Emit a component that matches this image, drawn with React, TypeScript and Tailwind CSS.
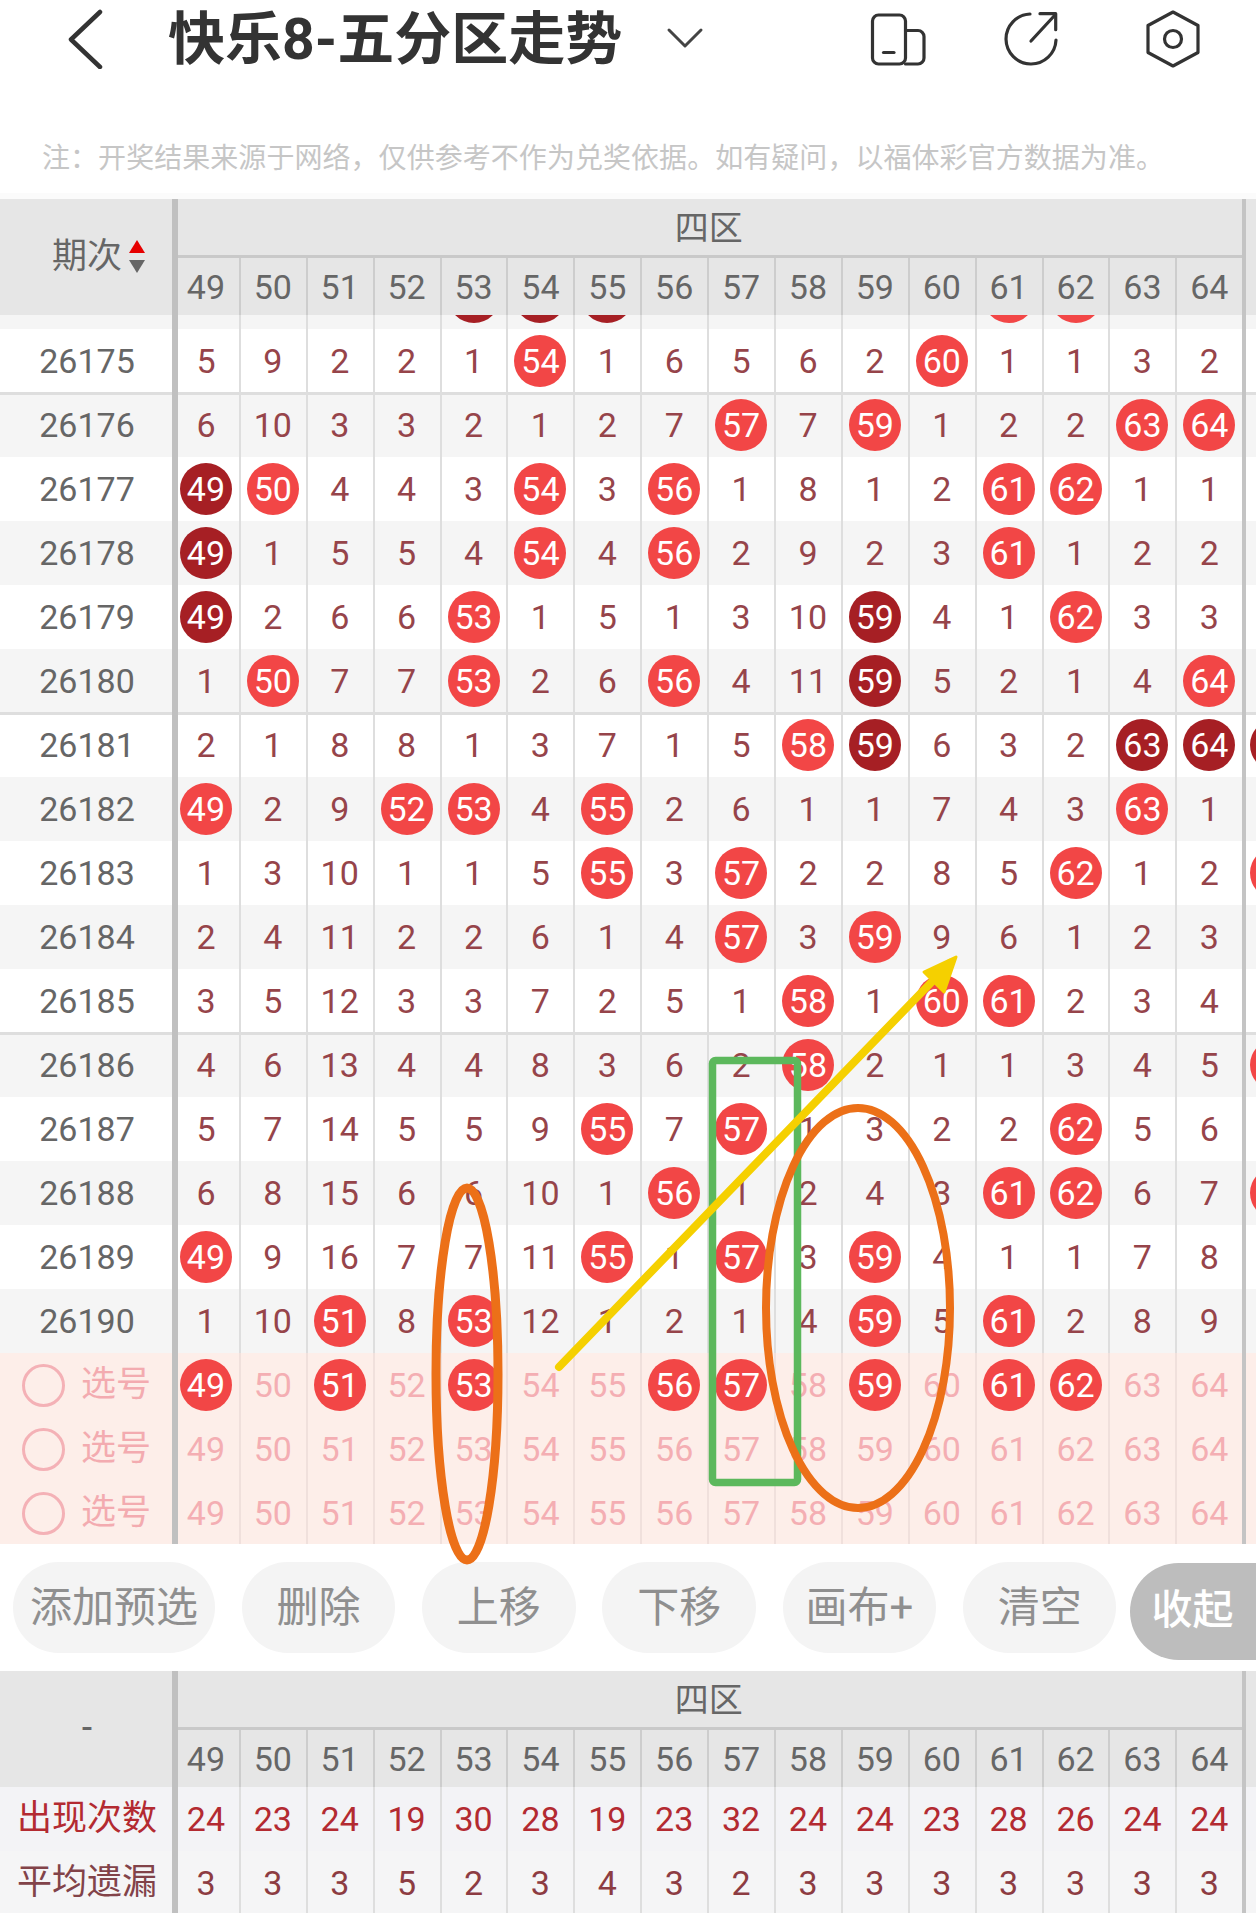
const cols = [49, 50, 51, 52, 53, 54, 55, 56, 57, 58, 59, 60, 61, 62, 63, 64, 65];

// R = red ball, D = dark ball, . = empty, the 17th entry is the clipped column on the right
const rows: { id: string; cells: string }[] = [
  { id: '', cells: '. . . . D D D . . . . . R R . . .' },
  { id: '26175', cells: '5 9 2 2 1 R 1 6 5 6 2 R 1 1 3 2 .' },
  { id: '26176', cells: '6 10 3 3 2 1 2 7 R 7 R 1 2 2 R R .' },
  { id: '26177', cells: 'D R 4 4 3 R 3 R 1 8 1 2 R R 1 1 .' },
  { id: '26178', cells: 'D 1 5 5 4 R 4 R 2 9 2 3 R 1 2 2 .' },
  { id: '26179', cells: 'D 2 6 6 R 1 5 1 3 10 D 4 1 R 3 3 .' },
  { id: '26180', cells: '1 R 7 7 R 2 6 R 4 11 D 5 2 1 4 R .' },
  { id: '26181', cells: '2 1 8 8 1 3 7 1 5 R D 6 3 2 D D D' },
  { id: '26182', cells: 'R 2 9 R R 4 R 2 6 1 1 7 4 3 R 1 .' },
  { id: '26183', cells: '1 3 10 1 1 5 R 3 R 2 2 8 5 R 1 2 R' },
  { id: '26184', cells: '2 4 11 2 2 6 1 4 R 3 R 9 6 1 2 3 .' },
  { id: '26185', cells: '3 5 12 3 3 7 2 5 1 R 1 R R 2 3 4 .' },
  { id: '26186', cells: '4 6 13 4 4 8 3 6 2 R 2 1 1 3 4 5 R' },
  { id: '26187', cells: '5 7 14 5 5 9 R 7 R 1 3 2 2 R 5 6 .' },
  { id: '26188', cells: '6 8 15 6 6 10 1 R 1 2 4 3 R R 6 7 R' },
  { id: '26189', cells: 'R 9 16 7 7 11 R 1 R 3 R 4 1 1 7 8 .' },
  { id: '26190', cells: '1 10 R 8 R 12 1 2 1 4 R 5 R 2 8 9 .' },
];

const picks = [
  'R P R P R P P R R P R P R R P P',
  'P P P P P P P P P P P P P P P P',
  'P P P P P P P P P P P P P P P P',
];

const appear = [24, 23, 24, 19, 30, 28, 19, 23, 32, 24, 24, 23, 28, 26, 24, 24];
const missing = [3, 3, 3, 5, 2, 3, 4, 3, 2, 3, 3, 3, 3, 3, 3, 3];

const buttons = ['添加预选', '删除', '上移', '下移', '画布+', '清空'];

function Ball({ n, dark }: { n?: number; dark?: boolean }) {
  return (
    <div
      className={`w-[52px] h-[52px] rounded-full flex items-center justify-center text-white text-[34px] ${
        dark ? 'bg-[#a61f24]' : 'bg-[#f24646]'
      }`}
    >
      {n}
    </div>
  );
}

function ZoneHeader({ children }: { children: React.ReactNode }) {
  return (
    <div className="flex h-[116px] bg-[#e6e6e6] text-[#666]">
      <div className="w-[174px] shrink-0 flex items-center">{children}</div>
      <div className="flex flex-col">
        <div className="h-[59px] w-[1069.4px] border-b-[3px] border-[#c9c9c9] flex items-center justify-center pt-[3px] text-[34px]">
          四区
        </div>
        <div className="flex h-[57px]">
          {cols.slice(0, 16).map((c) => (
            <div
              key={c}
              className="w-[66.9px] border-r-2 border-[#cdcdcd] flex items-center justify-center pt-[1px] pr-[1px] text-[34px]"
            >
              {c}
            </div>
          ))}
        </div>
      </div>
    </div>
  );
}

function Dividers() {
  return (
    <>
      <div className="absolute top-0 bottom-0 left-[172px] w-[6px] bg-[#c0c0c0] z-[2]" />
      <div className="absolute top-0 bottom-0 left-[1242px] w-[4px] bg-[#c4c4c4] z-[2]" />
    </>
  );
}

export default function App() {
  return (
    <div className="relative w-[1256px] h-[1913px] overflow-hidden bg-white font-['Roboto','Noto_Sans_CJK_SC',sans-serif]">
      {/* title bar */}
      <div className="flex items-center h-[78px] pl-[66px]">
        <svg width="40" height="60" viewBox="0 0 40 60" fill="none" stroke="#333" strokeWidth="4.5" strokeLinecap="round" strokeLinejoin="round" className="shrink-0">
          <path d="M34 3 L5 30.5 L34 58" />
        </svg>
        <div className="ml-[62px] w-[452px] pt-[1px] text-[57px] font-bold text-[#333] whitespace-nowrap">快乐8-五分区走势</div>
        <svg width="40" height="24" viewBox="0 0 40 24" fill="none" stroke="#444" strokeWidth="3" strokeLinecap="round" strokeLinejoin="round" className="ml-[45px] shrink-0 -mt-[3px]">
          <path d="M4 4 L20 20 L36 4" />
        </svg>
        <svg width="60" height="60" viewBox="0 0 60 60" fill="none" stroke="#333" strokeWidth="3.2" strokeLinecap="round" strokeLinejoin="round" className="ml-[163px] shrink-0">
          <rect x="4.5" y="6" width="33" height="49" rx="6" />
          <path d="M37.5 21.5 H50 A6 6 0 0 1 56 27.5 V49 A6 6 0 0 1 50 55 H37.5" />
          <path d="M15.5 43.5 H26" />
        </svg>
        <svg width="60" height="60" viewBox="0 0 60 60" fill="none" stroke="#333" strokeWidth="3.2" strokeLinecap="round" strokeLinejoin="round" className="ml-[73px] shrink-0">
          <path d="M29 5 A25 25 0 1 0 55 31" />
          <path d="M30 32 L54 6" />
          <path d="M39 4.7 H54.7 V20.7" />
        </svg>
        <svg width="60" height="60" viewBox="0 0 60 60" fill="none" stroke="#333" strokeWidth="3.2" strokeLinecap="round" strokeLinejoin="round" className="ml-[82px] shrink-0">
          <path d="M30 3 L55 16.5 V43.5 L30 57 L5 43.5 V16.5 Z" />
          <circle cx="30" cy="30" r="8.5" />
        </svg>
      </div>

      {/* note */}
      <div className="h-[121px] pt-[60px] pl-[42px] border-b-[6px] border-[#fbfbfb] text-[28px] tracking-[0.05px] leading-[42px] text-[#c6c6c6] whitespace-nowrap">
        注：开奖结果来源于网络，仅供参考不作为兑奖依据。如有疑问，以福体彩官方数据为准。
      </div>

      {/* trend table */}
      <div className="relative">
        <Dividers />
        <ZoneHeader>
          <div className="flex items-center pl-[52px] gap-[6px]">
            <span className="text-[35px]">期次</span>
            <svg width="18" height="36" viewBox="0 0 18 36">
              <path d="M9 1 L17 14 H1 Z" fill="#e60000" />
              <path d="M1 21 H17 L9 34 Z" fill="#666" />
            </svg>
          </div>
        </ZoneHeader>

        <div className="h-[1229px] overflow-hidden">
          <div className="-mt-[50px]">
            {rows.map((r, i) => (
              <div
                key={i}
                className={`flex h-[64px] relative ${i % 2 === 0 ? 'bg-[#f5f5f5]' : 'bg-white'} ${
                  i === 1 || i === 6 || i === 11 ? 'z-[1] shadow-[0_2px_0_#dedede,inset_0_-1px_0_#dedede]' : ''
                }`}
              >
                <div className="w-[174px] shrink-0 flex items-center justify-center pt-[1px] text-[34px] text-[#666]">{r.id}</div>
                {r.cells.split(' ').map((v, j) => {
                  const blank = i === 0 || j === 16;
                  return (
                    <div
                      key={j}
                      className="w-[66.9px] shrink-0 border-r-2 border-[#dedede] pr-[1px] flex items-center justify-center text-[34px] text-[#96444a]"
                    >
                      {v === 'R' ? (
                        <Ball n={blank ? undefined : cols[j]} />
                      ) : v === 'D' ? (
                        <Ball n={blank ? undefined : cols[j]} dark />
                      ) : v === '.' ? null : (
                        <span className="pt-[1px]">{v}</span>
                      )}
                    </div>
                  );
                })}
              </div>
            ))}
            {picks.map((p, i) => (
              <div key={i} className="flex h-[64px] bg-[#fdeee9]">
                <div className="w-[174px] shrink-0 flex items-center pl-[22px] text-[35px] text-[#f3abb0]">
                  <div className="w-[43px] h-[43px] rounded-full border-[3px] border-[#f4b1b6]" />
                  <span className="ml-[16px]">选号</span>
                </div>
                {p.split(' ').map((v, j) => (
                  <div
                    key={j}
                    className="w-[66.9px] shrink-0 border-r-2 border-[#f0e0dc] pr-[1px] flex items-center justify-center text-[34px] text-[#f4aeb3]"
                  >
                    {v === 'R' ? <Ball n={cols[j]} /> : <span className="pt-[1px]">{cols[j]}</span>}
                  </div>
                ))}
              </div>
            ))}
          </div>
        </div>
      </div>

      {/* actions */}
      <div className="flex items-center h-[127px] pl-[13px]">
        {buttons.map((b, i) => (
          <div
            key={b}
            className={`h-[91px] rounded-full bg-[#f4f4f4] flex items-center justify-center text-[42px] text-[#8f8f8f] shrink-0 ${
              i === 0 ? 'w-[202px]' : 'w-[153.5px] ml-[26.8px]'
            }`}
          >
            {b}
          </div>
        ))}
        <div className="ml-[14px] h-[97px] w-[180px] mt-[7px] shrink-0 rounded-l-full bg-[#bdbdbd] flex items-center pl-[21px] text-[41px] font-medium text-white">
          收起
        </div>
      </div>

      {/* summary table */}
      <div className="relative">
        <Dividers />
        <ZoneHeader>
          <div className="w-[174px] text-center text-[34px] -mt-[4px] font-medium">-</div>
        </ZoneHeader>
        {[
          { label: '出现次数', values: appear, labelColor: 'text-[#b32a31]', color: 'text-[#b32a31]', bg: 'bg-[#f3f3f6]' },
          { label: '平均遗漏', values: missing, labelColor: 'text-[#824349]', color: 'text-[#8d3c42]', bg: 'bg-[#f5f5f6]' },
        ].map((s) => (
          <div key={s.label} className={`flex h-[64px] ${s.bg}`}>
            <div className={`w-[174px] shrink-0 flex items-center justify-center text-[35px] ${s.labelColor}`}>{s.label}</div>
            {s.values.map((v, j) => (
              <div key={j} className={`w-[66.9px] shrink-0 border-r-2 border-[#dedede] pr-[1px] flex items-center justify-center pt-[1px] text-[34px] ${s.color}`}>
                {v}
              </div>
            ))}
          </div>
        ))}
      </div>

      {/* hand drawn marks on top of the screenshot */}
      <svg className="absolute inset-0 z-10 pointer-events-none" width="1256" height="1913" viewBox="0 0 1256 1913" fill="none">
        <rect x="712.5" y="1060.5" width="85" height="422" rx="3" stroke="#5cb85c" strokeWidth="7.5" />
        <ellipse cx="467" cy="1374" rx="31" ry="186" stroke="#ec7018" strokeWidth="9" />
        <ellipse cx="858" cy="1308" rx="92" ry="200" stroke="#ec7018" strokeWidth="8" />
        <path d="M559 1367 L950 963" stroke="#f5d000" strokeWidth="8" strokeLinecap="round" />
        <path d="M924 972 L956 957 L944 992 Z" fill="#f5d000" stroke="#f5d000" strokeWidth="3" strokeLinejoin="round" />
      </svg>
    </div>
  );
}
